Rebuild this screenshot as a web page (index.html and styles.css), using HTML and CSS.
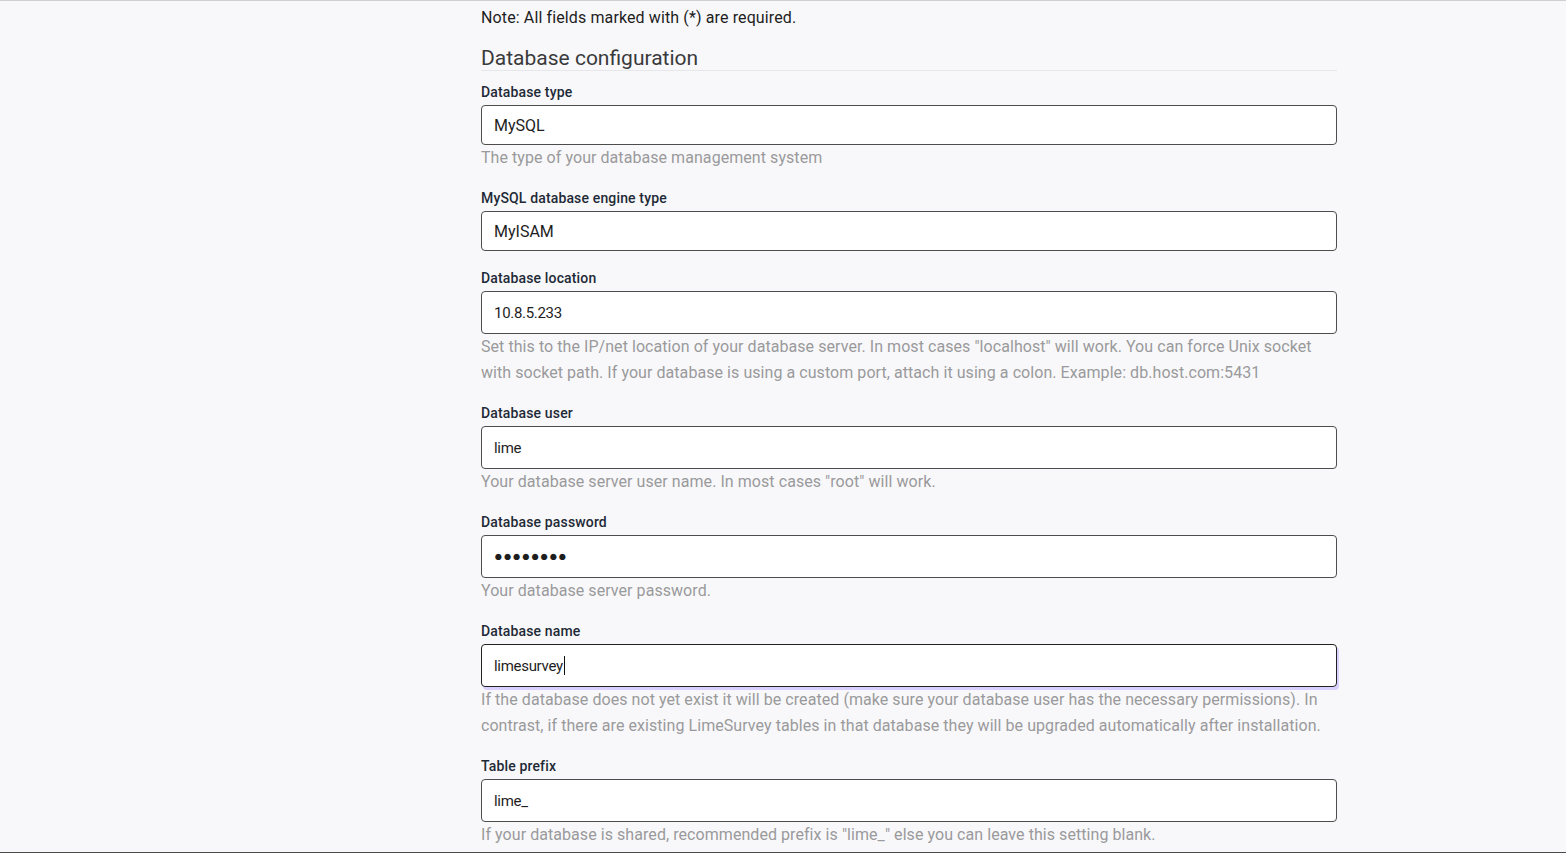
FILE: index.html
```html
<!DOCTYPE html>
<html lang="en">
<head>
<meta charset="utf-8">
<title>Database configuration</title>
<link rel="stylesheet" href="styles.css">
</head>
<body>
<div class="page">
  <div class="content">
    <p class="note">Note: All fields marked with (*) are required.</p>
    <h2 class="section-title">Database configuration</h2>

    <div class="group">
      <label class="label">Database type</label>
      <div class="input select">MySQL</div>
      <div class="help">The type of your database management system</div>
    </div>

    <div class="group">
      <label class="label">MySQL database engine type</label>
      <div class="input select">MyISAM</div>
    </div>

    <div class="group">
      <label class="label">Database location</label>
      <div class="input text">10.8.5.233</div>
      <div class="help">Set this to the IP/net location of your database server. In most cases "localhost" will work. You can force Unix socket with socket path. If your database is using a custom port, attach it using a colon. Example: db.host.com:5431</div>
    </div>

    <div class="group">
      <label class="label">Database user</label>
      <div class="input text">lime</div>
      <div class="help">Your database server user name. In most cases "root" will work.</div>
    </div>

    <div class="group">
      <label class="label">Database password</label>
      <div class="input text password">&#9679;&#9679;&#9679;&#9679;&#9679;&#9679;&#9679;&#9679;</div>
      <div class="help">Your database server password.</div>
    </div>

    <div class="group">
      <label class="label">Database name</label>
      <div class="input text focused">limesurvey<span class="caret"></span></div>
      <div class="help">If the database does not yet exist it will be created (make sure your database user has the necessary permissions). In contrast, if there are existing LimeSurvey tables in that database they will be upgraded automatically after installation.</div>
    </div>

    <div class="group">
      <label class="label">Table prefix</label>
      <div class="input text">lime_</div>
      <div class="help">If your database is shared, recommended prefix is "lime_" else you can leave this setting blank.</div>
    </div>
  </div>
</div>
</body>
</html>
```
FILE: styles.css
```css
html, body {
  margin: 0;
  padding: 0;
}

body {
  background: #f8f8fa;
  font-family: Roboto, "Liberation Sans", sans-serif;
  color: #1e1e1e;
}

.page {
  height: 853px;
  box-sizing: border-box;
  border-top: 1px solid #cfcfd2;
  border-bottom: 1px solid #4a4a4a;
  overflow: hidden;
}

.content {
  width: 856px;
  margin-left: 481px;
  padding-top: 5px;
}

.note {
  margin: 0;
  font-size: 16px;
  line-height: 24px;
  letter-spacing: 0.12px;
  color: #1e1e1e;
}

.section-title {
  margin: 16px 0 0;
  font-size: 21px;
  font-weight: 400;
  line-height: 24px;
  color: #3a3a3c;
  border-bottom: 1px solid #e6e7ea;
  padding-bottom: 0;
}

.group {
  margin-top: 11px;
  margin-bottom: 17px;
}

.group + .group {
  margin-top: 0;
}

.label {
  display: block;
  font-size: 14px;
  font-weight: 500;
  line-height: 21px;
  letter-spacing: 0.15px;
  color: #1f2a37;
  margin-bottom: 2px;
}

.input {
  box-sizing: border-box;
  background: #fff;
  border: 1px solid #4d4d4d;
  border-radius: 4px;
  padding: 0 12px;
  display: flex;
  align-items: center;
  color: #1e1e1e;
}

.select {
  height: 40px;
  font-size: 16px;
}

.text {
  height: 43px;
  font-size: 15px;
  letter-spacing: -0.3px;
}

.password {
  font-size: 14.5px;
  letter-spacing: 0.4px;
}

.focused {
  border-color: #222;
  box-shadow: 2px 3px 0 0 #d9d0ff;
}

.caret {
  display: inline-block;
  width: 1px;
  height: 19px;
  background: #111;
  margin-left: 1px;
}

.help {
  font-size: 16px;
  line-height: 26px;
  letter-spacing: 0.06px;
  color: #9a9a9c;
}
```
